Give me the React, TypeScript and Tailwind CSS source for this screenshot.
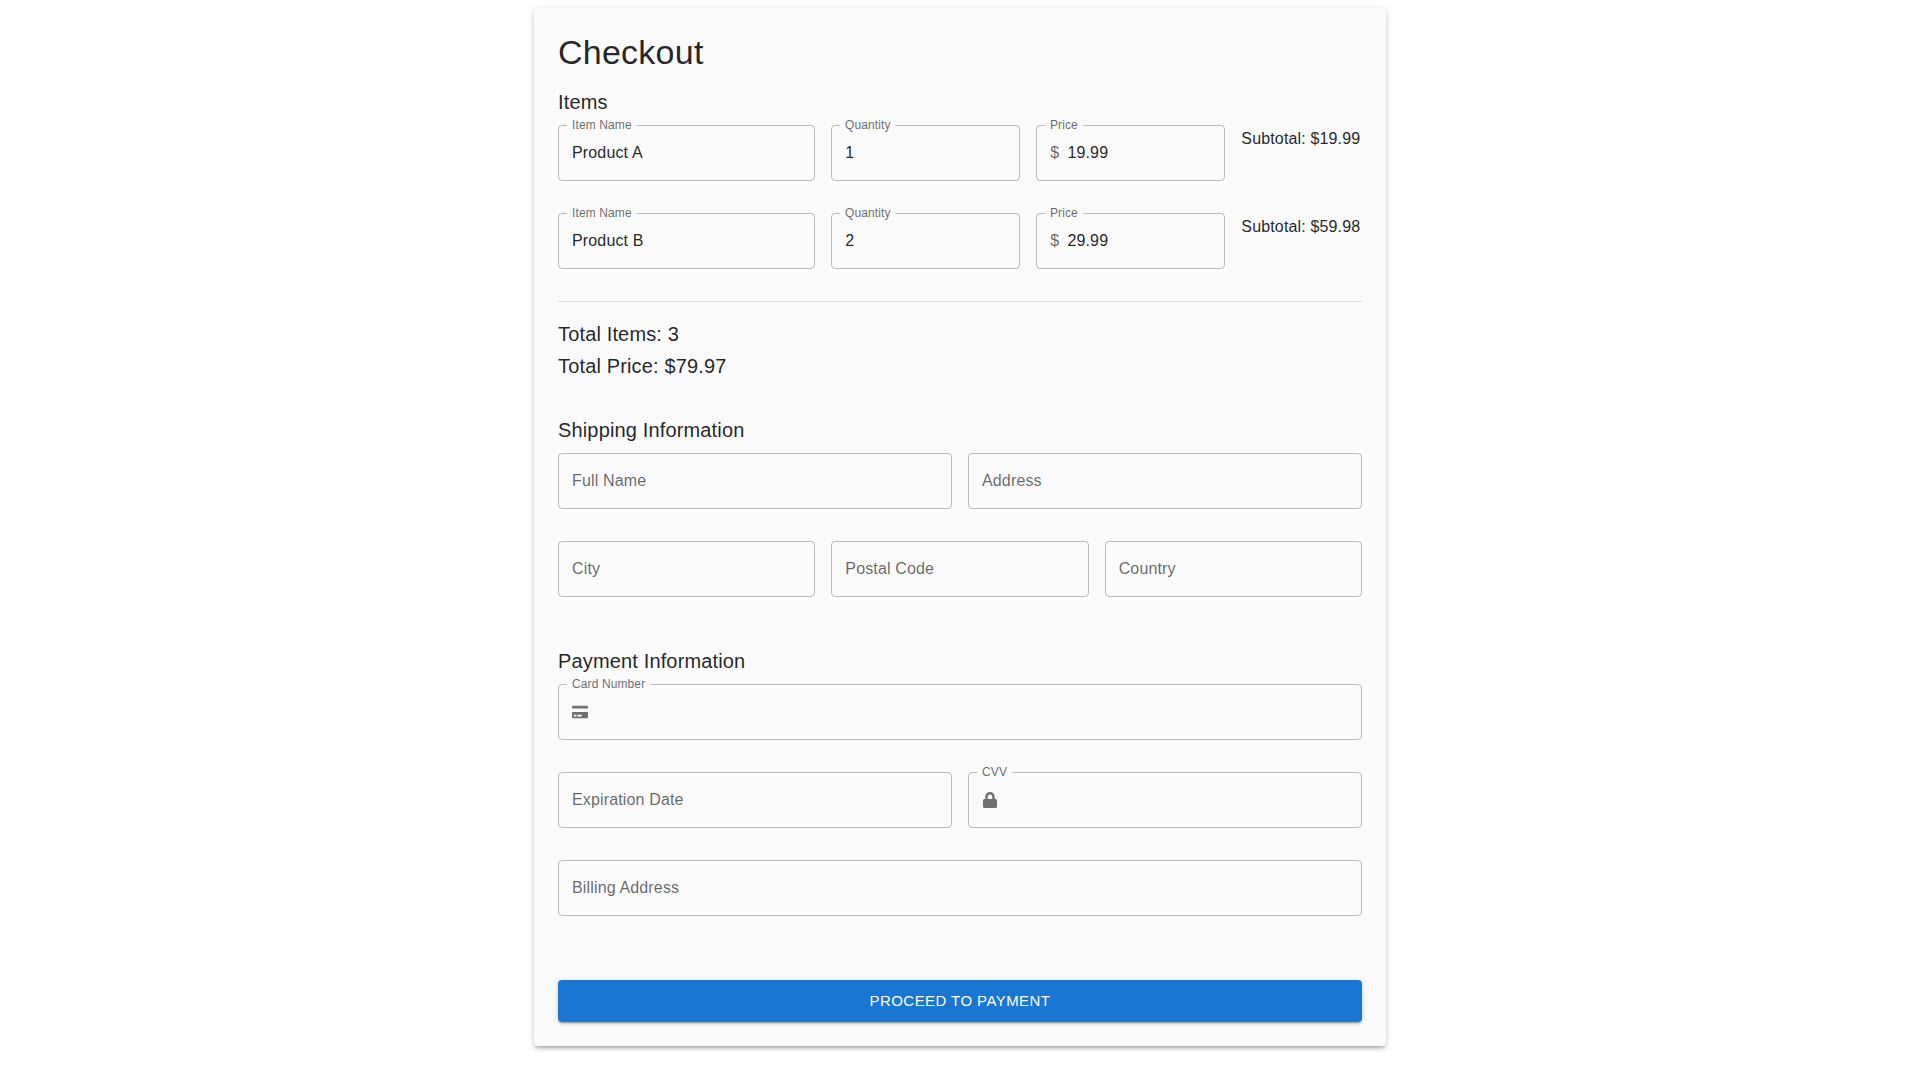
import type { ReactNode } from 'react';
import { FaCreditCard, FaLock } from 'react-icons/fa';

interface FieldProps {
  label: string;
  value?: string;
  icon?: ReactNode;
  prefix?: string;
  className?: string;
}

// Outlined field: label sits in the notch once the field has content or an adornment
function Field({ label, value, icon, prefix, className = '' }: FieldProps) {
  const floated = Boolean(value || icon || prefix);

  return (
    <div className={`relative flex h-14 items-center rounded border border-black/25 px-[13px] text-base tracking-[0.15px] ${className}`}>
      {floated ? (
        <>
          <span className="absolute left-2 top-[-8px] origin-top-left scale-75 whitespace-nowrap bg-[#fafafa] px-[6.67px] text-base leading-5 text-black/60">{label}</span>
          {icon && <span className="flex text-black/55">{icon}</span>}
          {prefix && <span className="mr-2 text-black/60">{prefix}</span>}
          {value && <span className="text-black/87">{value}</span>}
        </>
      ) : (
        <span className="text-black/60">{label}</span>
      )}
    </div>
  );
}

function SectionTitle({ children }: { children: ReactNode }) {
  return <h6 className="mb-[7px] text-xl leading-8 tracking-[0.15px] text-black/87">{children}</h6>;
}

const items = [
  { name: 'Product A', quantity: '1', price: '19.99', subtotal: '19.99' },
  { name: 'Product B', quantity: '2', price: '29.99', subtotal: '59.98' },
];

export default function App() {
  return (
    <div className="flex justify-center bg-white pb-[34px] font-['Liberation_Sans',sans-serif]">
      <main className="mt-2 w-[852px] rounded bg-[#fafafa] p-6 shadow-[0_3px_3px_-2px_rgba(0,0,0,0.2),0_3px_4px_0_rgba(0,0,0,0.14),0_1px_8px_0_rgba(0,0,0,0.12)]">
        <h4 className="mb-3 pb-px text-[34px] leading-[41px] tracking-[0.25px] text-black/87">Checkout</h4>

        <SectionTitle>Items</SectionTitle>
        <div className="flex flex-col gap-8">
          {items.map((item) => (
            <div key={item.name} className="grid grid-cols-12 gap-4">
              <Field className="col-span-4" label="Item Name" value={item.name} />
              <Field className="col-span-3" label="Quantity" value={item.quantity} />
              <Field className="col-span-3" label="Price" prefix="$" value={item.price} />
              <p className="col-span-2 whitespace-nowrap pt-[2px] text-base leading-6 tracking-[0.15px] text-black/87">Subtotal: ${item.subtotal}</p>
            </div>
          ))}
        </div>

        <hr className="mt-8 mb-4 border-black/10" />
        <p className="text-xl leading-8 tracking-[0.15px] text-black/87">Total Items: 3</p>
        <p className="mb-8 text-xl leading-8 tracking-[0.15px] text-black/87">Total Price: $79.97</p>

        <SectionTitle>Shipping Information</SectionTitle>
        <div className="mb-8 grid grid-cols-12 gap-x-4 gap-y-8">
          <Field className="col-span-6" label="Full Name" />
          <Field className="col-span-6" label="Address" />
          <Field className="col-span-4" label="City" />
          <Field className="col-span-4" label="Postal Code" />
          <Field className="col-span-4" label="Country" />
        </div>

        <div className="pt-4">
          <SectionTitle>Payment Information</SectionTitle>
        </div>
        <div className="grid grid-cols-12 gap-x-4 gap-y-8">
          <Field className="col-span-12" label="Card Number" icon={<FaCreditCard size={16} />} />
          <Field className="col-span-6" label="Expiration Date" />
          <Field className="col-span-6" label="CVV" icon={<FaLock size={16} />} />
          <Field className="col-span-12" label="Billing Address" />
        </div>

        <button
          type="button"
          className="mt-[64px] block h-[42.25px] w-full rounded bg-[#1976d2] text-[15px] tracking-[0.43px] text-white shadow-[0_3px_1px_-2px_rgba(0,0,0,0.2),0_2px_2px_0_rgba(0,0,0,0.14),0_1px_5px_0_rgba(0,0,0,0.12)]"
        >
          PROCEED TO PAYMENT
        </button>
      </main>
    </div>
  );
}
